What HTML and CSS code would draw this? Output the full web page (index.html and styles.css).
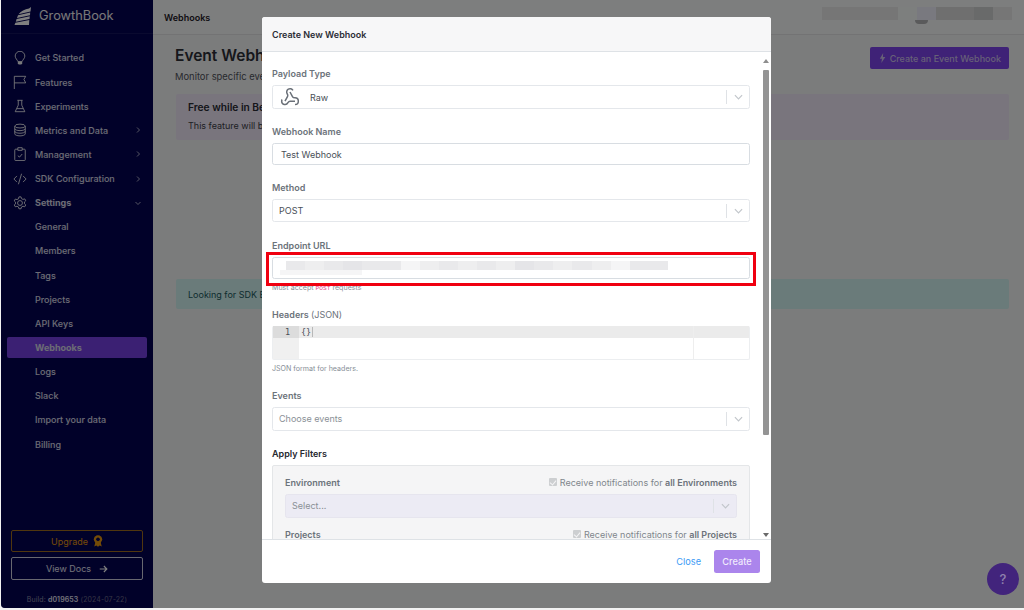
FILE: index.html
```html
<!DOCTYPE html>
<html lang="en">
<head>
  <meta charset="UTF-8" />
  <title>Webhooks - GrowthBook</title>
  <link rel="stylesheet" href="styles.css">
</head>
<body>
  <div class="app">
    <!-- Sidebar -->
    <aside class="sidebar">
      <div class="brand">
        <svg class="brand-logo" viewBox="0 0 18 18"><path d="M17 0 16.500 4.500 4.500 7.300C6.500 4.300 11 2.300 15 1.500Z M4 8.300 16.200 5.500 16 8.200 3 11Z M2.600 12 15.800 9.200 15.500 12 1.800 14.700Z M1.400 15.700 15.300 13 15 18H.5Z" fill="#fff"/></svg>
        <span>GrowthBook</span>
      </div>
      <nav class="nav">
        <a class="nav-item">
          <svg class="nav-icon" viewBox="0 0 16 16"><path d="M5.500 12C5 10 2.500 8.500 2.500 5.800a5.500 5.500 0 0 1 11 0C13.500 8.500 11 10 10.500 12Z"/><path class="solid" d="M5.500 12.500h5V14l-1 1.500h-3l-1-1.500Z"/></svg>
          Get Started
        </a>
        <a class="nav-item">
          <svg class="nav-icon" viewBox="0 0 16 16"><path d="M1.500 16V1.500h13L12.500 5l2 4H1.500"/></svg>
          Features
        </a>
        <a class="nav-item">
          <svg class="nav-icon" viewBox="0 0 16 16"><path d="M5 1.500h6M6 1.500v5.500L2.500 14.500h11L10 7V1.500M4.500 11h7"/></svg>
          Experiments
        </a>
        <a class="nav-item">
          <svg class="nav-icon" viewBox="0 0 16 16"><ellipse cx="8" cy="3.500" rx="6" ry="2.200"/><path d="M2 3.500v9c0 1.200 2.700 2.200 6 2.200s6-1 6-2.200v-9M2 6.500c0 1.200 2.700 2.200 6 2.200s6-1 6-2.200M2 9.500c0 1.200 2.700 2.200 6 2.200s6-1 6-2.200"/></svg>
          Metrics and Data
          <svg class="nav-caret" viewBox="0 0 8 8"><path d="M3 1.500 5.500 4 3 6.500"/></svg>
        </a>
        <a class="nav-item">
          <svg class="nav-icon" viewBox="0 0 16 16"><path d="M5.500 2.500H3a1 1 0 0 0-1 1V14.500a1 1 0 0 0 1 1h10a1 1 0 0 0 1-1V3.500a1 1 0 0 0-1-1h-2.500M5.500 .8h5v3h-5ZM5.500 10l2 1.500L10.500 8"/></svg>
          Management
          <svg class="nav-caret" viewBox="0 0 8 8"><path d="M3 1.500 5.500 4 3 6.500"/></svg>
        </a>
        <a class="nav-item">
          <svg class="nav-icon" viewBox="0 0 16 16"><path d="M4.500 4.500 1 8l3.500 3.500M11.500 4.500 15 8l-3.500 3.500M9.800 2l-3.600 12"/></svg>
          SDK Configuration
          <svg class="nav-caret" viewBox="0 0 8 8"><path d="M3 1.500 5.500 4 3 6.500"/></svg>
        </a>
        <a class="nav-item nav-open">
          <svg class="nav-icon" viewBox="0 0 16 16"><circle cx="8" cy="8" r="2.800"/><path d="M6.800 1h2.400l.5 2 1.700.9 2-.6 1.200 2.100-1.500 1.400v2l1.500 1.400-1.200 2.100-2-.6-1.700.9-.5 2H6.800l-.5-2-1.700-.9-2 .6-1.200-2.100L2.900 9V7L1.400 5.600l1.200-2.100 2 .6 1.700-.9Z"/></svg>
          Settings
          <svg class="nav-caret" viewBox="0 0 8 8"><path d="M1.500 3 4 5.500 6.500 3"/></svg>
        </a>
        <a class="nav-item nav-sub">General</a>
        <a class="nav-item nav-sub">Members</a>
        <a class="nav-item nav-sub">Tags</a>
        <a class="nav-item nav-sub">Projects</a>
        <a class="nav-item nav-sub">API Keys</a>
        <a class="nav-item nav-sub nav-active">Webhooks</a>
        <a class="nav-item nav-sub">Logs</a>
        <a class="nav-item nav-sub">Slack</a>
        <a class="nav-item nav-sub">Import your data</a>
        <a class="nav-item nav-sub">Billing</a>
      </nav>
      <div class="side-foot">
        <a class="side-btn side-upgrade">
          Upgrade
          <svg class="award" viewBox="0 0 12 14"><path d="M3 8 1.500 13.500 4 12.500 6 14 8 12.500 10.500 13.500 9 8Z" fill="#e8960f"/><circle cx="6" cy="5" r="5" fill="#e8960f"/><circle cx="6" cy="5" r="2.200" fill="#030352"/></svg>
        </a>
        <a class="side-btn">
          View Docs
          <svg class="arrow" viewBox="0 0 12 10"><path d="M1 5h9.500M6.500 1l4 4-4 4"/></svg>
        </a>
        <p class="build">Build: <b>d019653</b> <span>(2024-07-22)</span></p>
      </div>
    </aside>

    <!-- Page behind the dialog -->
    <div class="main">
      <header class="topbar">
        <span class="topbar-title">Webhooks</span>
        <div class="topbar-user">
          <i class="cell w76 shade-a"></i>
          <i class="cell w19 shade-b"></i>
          <i class="cell w19 shade-c"></i>
          <i class="cell w38 shade-d"></i>
          <i class="cell w19 shade-e"></i>
          <i class="cell w19 shade-a"></i>
        </div>
      </header>
      <section class="content">
        <div class="page-head">
          <div>
            <h1>Event Webhooks</h1>
            <p>Monitor specific events</p>
          </div>
          <a class="btn-primary">
            <svg class="bolt" viewBox="0 0 8 12"><path d="M4.800 0 .8 6.800h2.600L2.600 12 7.400 4.800H4.500Z"/></svg>
            Create an Event Webhook
          </a>
        </div>
        <div class="callout callout-purple">
          <h4>Free while in Beta</h4>
          <p>This feature will be free</p>
        </div>
        <div class="callout callout-teal">Looking for SDK Endpoints?</div>
      </section>
    </div>

    <div class="backdrop"></div>

    <!-- Dialog -->
    <div class="modal">
      <div class="modal-head">Create New Webhook</div>
      <div class="modal-body">
        <div class="field field-payload">
          <label>Payload Type</label>
          <div class="select select-tall">
            <svg class="webhook" viewBox="0 0 24 24"><path d="M18 16.980h-5.990c-1.100 0-1.950.94-2.480 1.900A4 4 0 0 1 2 17c.01-.7.2-1.400.57-2"/><path d="m6 17 3.130-5.780c.53-.97.1-2.180-.5-3.100a4 4 0 1 1 6.890-4.060"/><path d="m12 6 3.130 5.730C15.660 12.700 16.900 13 18 13a4 4 0 0 1 0 8"/></svg>
            <span class="select-value">Raw</span>
            <span class="select-arrow"><svg viewBox="0 0 10 6"><path d="M1 1 5 5 9 1"/></svg></span>
          </div>
        </div>
        <div class="field field-name">
          <label>Webhook Name</label>
          <div class="input">Test Webhook</div>
        </div>
        <div class="field field-method">
          <label>Method</label>
          <div class="select">
            <span class="select-value">POST</span>
            <span class="select-arrow"><svg viewBox="0 0 10 6"><path d="M1 1 5 5 9 1"/></svg></span>
          </div>
        </div>
        <div class="field field-url">
          <label>Endpoint URL</label>
          <div class="input input-url">
            <div class="redact">
              <i class="cell w19 tint-a"></i><i class="cell w19 tint-b"></i><i class="cell w19 tint-a"></i>
              <i class="cell w19 tint-c"></i><i class="cell w19 tint-a"></i><i class="cell w19 tint-a"></i>
              <i class="cell w19 tint-d"></i><i class="cell w19 tint-b"></i><i class="cell w19 tint-a"></i>
              <i class="cell w19 tint-b"></i><i class="cell w19 tint-a"></i><i class="cell w19 tint-b"></i>
              <i class="cell w19 tint-c"></i><i class="cell w19 tint-a"></i><i class="cell w19 tint-b"></i>
              <i class="cell w19 tint-a"></i><i class="cell w19 tint-b"></i><i class="cell w19 tint-d"></i>
              <i class="cell w19 tint-a"></i><i class="cell w19 tint-a"></i>
            </div>
            <div class="redact-low"></div>
            <div class="marker"></div>
          </div>
          <small>Must accept <code>POST</code> requests</small>
        </div>
        <div class="field field-headers">
          <label>Headers <span>(JSON)</span></label>
          <div class="editor">
            <div class="editor-gutter"><span class="line-no">1</span></div>
            <div class="editor-code"><span class="line">{}<i class="cursor"></i></span></div>
            <div class="editor-margin"><span class="line"></span></div>
          </div>
          <small>JSON format for headers.</small>
        </div>
        <div class="field field-events">
          <label>Events</label>
          <div class="select select-tall">
            <span class="select-value placeholder">Choose events</span>
            <span class="select-arrow"><svg viewBox="0 0 10 6"><path d="M1 1 5 5 9 1"/></svg></span>
          </div>
        </div>
        <h5 class="filters-title">Apply Filters</h5>
        <div class="filters">
          <div class="filter-row">
            <label>Environment</label>
            <span class="check-label"><i class="check"></i>Receive notifications for <b>all Environments</b></span>
          </div>
          <div class="select select-tall select-disabled">
            <span class="select-value placeholder">Select...</span>
            <span class="select-arrow"><svg viewBox="0 0 10 6"><path d="M1 1 5 5 9 1"/></svg></span>
          </div>
          <div class="filter-row filter-row-next">
            <label>Projects</label>
            <span class="check-label"><i class="check"></i>Receive notifications for <b>all Projects</b></span>
          </div>
        </div>
      </div>
      <div class="scrollbar">
        <span class="tri-up"></span>
        <span class="thumb"></span>
        <span class="tri-down"></span>
      </div>
      <div class="modal-foot">
        <a class="btn-link">Close</a>
        <a class="btn-create">Create</a>
      </div>
    </div>

    <a class="help-fab">?</a>
  </div>
</body>
</html>
```

FILE: styles.css
```css
* {
  box-sizing: border-box;
}

html,
body {
  height: 100%;
}

body {
  margin: 0;
  background: #f2f2f2;
  font-family: Inter, "Liberation Sans", sans-serif;
  font-size: 9px;
  overflow: hidden;
}

.app {
  position: relative;
  display: flex;
  height: 608px;
  margin-left: 1px;
  background: #f7f8f9;
  border-bottom-left-radius: 4px;
  overflow: hidden;
}

/* Sidebar */
.sidebar {
  display: flex;
  flex-direction: column;
  flex: 0 0 152px;
  background: #030352;
  color: #e4e4f4;
}

.brand {
  display: flex;
  align-items: center;
  gap: 7px;
  height: 34px;
  padding: 0 0 2px 13px;
  border-bottom: 1px solid #14145e;
  font-size: 12.8px;
  color: #f0f0f0;
}

.brand-logo {
  width: 18px;
  height: 18px;
}

.nav {
  display: flex;
  flex-direction: column;
  padding-top: 11.800px;
}

.nav-item {
  display: flex;
  align-items: center;
  height: 24.15px;
  padding-left: 12px;
  padding-right: 11px;
  font-weight: 500;
  opacity: .95;
}

.nav-icon {
  flex: none;
  width: 14px;
  height: 14px;
  margin-right: 8px;
  fill: none;
  stroke: #fff;
  stroke-width: 1;
}

.nav-icon .solid {
  fill: #fff;
  stroke: none;
}

.nav-caret {
  width: 8px;
  height: 8px;
  margin-left: auto;
  fill: none;
  stroke: #c8c8dc;
  stroke-width: .9;
}

.nav-open {
  font-weight: 700;
}

.nav-sub {
  margin: 0 6px;
  padding-left: 28px;
  border-radius: 2px;
}

.nav-active {
  height: 20.500px;
  margin-top: 2px;
  margin-bottom: 1.650px;
  background: #7e44ee;
  font-weight: 700;
}

.side-foot {
  margin-top: auto;
  padding: 0 10px;
}

.side-btn {
  display: flex;
  align-items: center;
  justify-content: center;
  gap: 5px;
  height: 23px;
  margin-bottom: 5px;
  border: 1px solid #d0d0e0;
  border-radius: 2px;
}

.side-upgrade {
  border-color: #a06c1c;
  color: #e8960f;
  height: 22px;
}

.award {
  width: 10px;
  height: 12px;
}

.arrow {
  width: 9px;
  height: 8px;
  margin-left: 3px;
  fill: none;
  stroke: #fff;
  stroke-width: 1.500;
}

.build {
  margin: 15px 0 4px;
  text-align: center;
  font-size: 7px;
  color: #8c8ca8;
  letter-spacing: .1px;
}

.build b {
  font-weight: 600;
  color: #e4e4f4;
}

.build span {
  color: #6c6c8c;
}

/* Main page */
.main {
  flex: 1;
  min-width: 0;
}

.topbar {
  display: flex;
  align-items: center;
  justify-content: space-between;
  height: 35px;
  padding: 0 12px 0 11px;
  border-bottom: 1px solid #e6e6e8;
  background: #fbfcfc;
}

.topbar-title {
  font-weight: 600;
  color: #1e2028;
}

.topbar-user {
  position: relative;
  display: flex;
  height: 13px;
  margin-top: -7px;
}

/* Bottom of the avatar peeking out from under the redaction */
.topbar-user::after {
  content: "";
  position: absolute;
  left: 93px;
  top: 13px;
  width: 13px;
  height: 4px;
  border-radius: 0 0 7px 7px;
  background: #b4b5b6;
}

.cell {
  display: block;
  height: 100%;
}

.w19 {
  width: 19.100px;
}

.w38 {
  width: 38px;
}

.w76 {
  width: 76px;
}

.shade-a {
  background: #ececec;
}

.shade-b {
  background: #fbfffd;
}

.shade-c {
  background: #f2f2ff;
}

.shade-d {
  background: #dedfdf;
}

.shade-e {
  background: #d2d4d4;
}

.content {
  padding: 11px 15px 0 22px;
}

.page-head {
  display: flex;
  justify-content: space-between;
  align-items: flex-start;
}

.page-head h1 {
  margin: 0;
  font-size: 15.500px;
  line-height: 19px;
  font-weight: 600;
  color: #2c2f36;
}

.page-head p {
  margin: 6px 0 0;
  font-size: 9.400px;
  color: #50545c;
}

.btn-primary {
  display: flex;
  align-items: center;
  gap: 4px;
  height: 22px;
  margin-top: 1px;
  padding: 0 8px 0 9px;
  border-radius: 2px;
  background: #7e44ee;
  color: #cfc0ee;
  font-weight: 500;
}

.bolt {
  width: 7px;
  height: 10px;
  fill: #cfc0ee;
}

.callout {
  margin-left: 1px;
  border-radius: 2px;
  color: #3c4048;
  font-size: 9px;
}

.callout-purple {
  height: 46px;
  margin-top: 12px;
  padding: 7px 12px;
  background: #f3ebfb;
}

.callout-purple h4 {
  margin: 0 0 6px;
  font-size: 10.200px;
  line-height: 13px;
  font-weight: 600;
  color: #2a2c34;
}

.callout-purple p {
  margin: 0;
}

.callout-teal {
  display: flex;
  align-items: center;
  height: 30px;
  margin-top: 139px;
  padding: 0 12px;
  background: #d4f6f4;
  color: #1c5a5e;
}

/* Everything under the dialog gets dimmed */
.backdrop {
  position: absolute;
  inset: 0;
  background: rgba(0, 0, 0, .5);
}

.modal {
  position: absolute;
  left: 261px;
  top: 17px;
  display: flex;
  flex-direction: column;
  width: 509px;
  height: 566px;
  background: #fff;
  border-radius: 3px;
  overflow: hidden;
  color: #495057;
}

.modal-head {
  display: flex;
  align-items: center;
  flex: none;
  height: 35px;
  padding-left: 10px;
  border-bottom: 1px solid #dee2e6;
  background: #f7f7f8;
  color: #2b2d36;
  font-weight: 600;
}

.modal-body {
  flex: 1;
  min-height: 0;
  padding: 15px 21px 0 10px;
  overflow: hidden;
}

.field label,
.filter-row label {
  display: block;
  line-height: 13px;
  font-weight: 600;
  color: #6c737b;
}

.field label span {
  font-weight: 400;
}

.field label {
  margin-bottom: 5px;
}

.field small {
  display: block;
  margin-top: 4px;
  font-size: 7.100px;
  line-height: 10px;
  color: #868e96;
}

.field small code {
  font-family: "Liberation Mono", monospace;
  font-size: 6.200px;
  color: #e83e8c;
}

.field-payload {
  height: 57.500px;
}

.field-name {
  height: 56px;
}

.field-method {
  height: 58px;
}

.field-url {
  height: 69px;
}

.field-headers {
  height: 81px;
}

.field-events {
  height: 58px;
}

.input,
.select {
  display: flex;
  align-items: center;
  height: 22.500px;
  padding: 1px 0 0 8px;
  border: 1px solid #d8dde2;
  border-radius: 2.500px;
  background: #fff;
}

.select {
  height: 23px;
  padding: 0 0 0 6px;
  border-color: #e4e7eb;
}

.field-method .select {
  margin-top: 1px;
  padding-top: 1px;
}

.select-tall {
  height: 24px;
}

.webhook {
  flex: none;
  width: 20px;
  height: 20px;
  margin-left: 1px;
  fill: none;
  stroke: #6a7078;
  stroke-width: 1.800;
}

.select-value {
  margin-right: auto;
}

.webhook + .select-value {
  margin-left: 10px;
}

.placeholder {
  color: #8a9096;
}

.select-arrow {
  display: flex;
  align-items: center;
  justify-content: center;
  width: 23px;
  height: 14px;
  border-left: 1px solid #dfe2e6;
}

.select-arrow svg {
  width: 9px;
  height: 6px;
  fill: none;
  stroke: #c2c6cb;
  stroke-width: 1.300;
}

.input-url {
  position: relative;
  display: block;
  padding: 0;
}

.redact {
  display: flex;
  height: 9px;
  margin: 3px 0 0 13px;
}

.redact-low {
  width: 82px;
  height: 5px;
  margin-left: 7px;
  background: #f5f5f6;
}

.tint-a {
  background: #e9e9eb;
}

.tint-b {
  background: #eeeeef;
}

.tint-c {
  background: #e5e5e8;
}

.tint-d {
  background: #f5f5f6;
}

/* Annotation drawn on the screenshot */
.marker {
  position: absolute;
  inset: -6px -7px -8px;
  border: 3px solid #f00010;
}

.editor {
  display: flex;
  height: 34px;
  border: 1px solid #eceef0;
  border-top: 0;
  border-radius: 2px;
  font-family: "DejaVu Sans Mono", monospace;
  font-size: 8.500px;
  color: #4a4f57;
}

.editor .line,
.line-no {
  display: block;
  height: 12px;
  line-height: 12px;
  background: #ebebeb;
}

.editor-gutter {
  flex: 0 0 26px;
  background: #f0f0f0;
}

.line-no {
  background: #dcdcdc;
  padding-right: 9px;
  text-align: right;
}

.editor-code {
  flex: 1;
}

.editor-code .line {
  padding-left: 2px;
}

.cursor {
  display: inline-block;
  width: 1px;
  height: 10px;
  margin-left: 1px;
  vertical-align: -2px;
  background: #b8b8b8;
}

.editor-margin {
  flex: 0 0 56px;
  border-left: 1px solid #eeeeee;
}

.filters-title {
  margin: 0 0 5px;
  font-size: 9px;
  line-height: 13px;
  font-weight: 600;
  color: #25272e;
}

.filters {
  padding: 8px 12px 0;
  height: 120px;
  border: 1px solid #e4e6e8;
  border-radius: 2px;
  background: #f5f5f6;
}

.filter-row {
  display: flex;
  align-items: center;
  justify-content: space-between;
  height: 17px;
  margin-bottom: 3px;
}

.filter-row-next {
  margin-top: 8px;
}

.check-label {
  display: flex;
  align-items: center;
  color: #80868c;
  white-space: pre;
}

.check-label b {
  font-weight: 600;
  color: #6c737b;
}

.check {
  position: relative;
  width: 8px;
  height: 8px;
  margin-right: 3px;
  border-radius: 1px;
  background: #cdcfd1;
}

.check::after {
  content: "";
  position: absolute;
  left: 2.500px;
  top: .5px;
  width: 3px;
  height: 5px;
  border: solid #f5f5f6;
  border-width: 0 1px 1px 0;
  transform: rotate(40deg);
}

.select-disabled {
  background: #ecebf4;
  border-color: #e6e5ee;
}

/* Scrollbar */
.scrollbar {
  position: absolute;
  right: 1px;
  top: 35px;
  bottom: 43px;
  display: flex;
  flex-direction: column;
  align-items: center;
  width: 9px;
  padding-top: 7px;
}

.thumb {
  width: 6px;
  height: 365px;
  margin-top: 7px;
  background: #949494;
  border-radius: 1px;
}

.tri-up,
.tri-down {
  width: 0;
  height: 0;
  border-left: 3px solid transparent;
  border-right: 3px solid transparent;
}

.tri-up {
  border-bottom: 4px solid #8e8e8e;
}

.tri-down {
  margin-top: auto;
  margin-bottom: 3px;
  border-top: 4px solid #6a6a6a;
}

.modal-foot {
  display: flex;
  align-items: center;
  justify-content: flex-end;
  flex: none;
  gap: 13px;
  height: 44px;
  padding: 0 11px 1px 0;
  border-top: 1px solid #dee2e6;
  font-size: 9.200px;
}

.btn-link {
  color: #3d9bf5;
}

.btn-create {
  display: flex;
  align-items: center;
  justify-content: center;
  width: 46px;
  height: 23px;
  border-radius: 2.500px;
  background: #ab85ec;
  color: #f1ebfc;
  font-weight: 500;
}

.help-fab {
  position: absolute;
  left: 986px;
  top: 563px;
  display: flex;
  align-items: center;
  justify-content: center;
  width: 32px;
  height: 32px;
  border-radius: 50%;
  background: #42247c;
  color: #8f82ad;
  font-size: 13px;
  font-weight: 500;
}
```
